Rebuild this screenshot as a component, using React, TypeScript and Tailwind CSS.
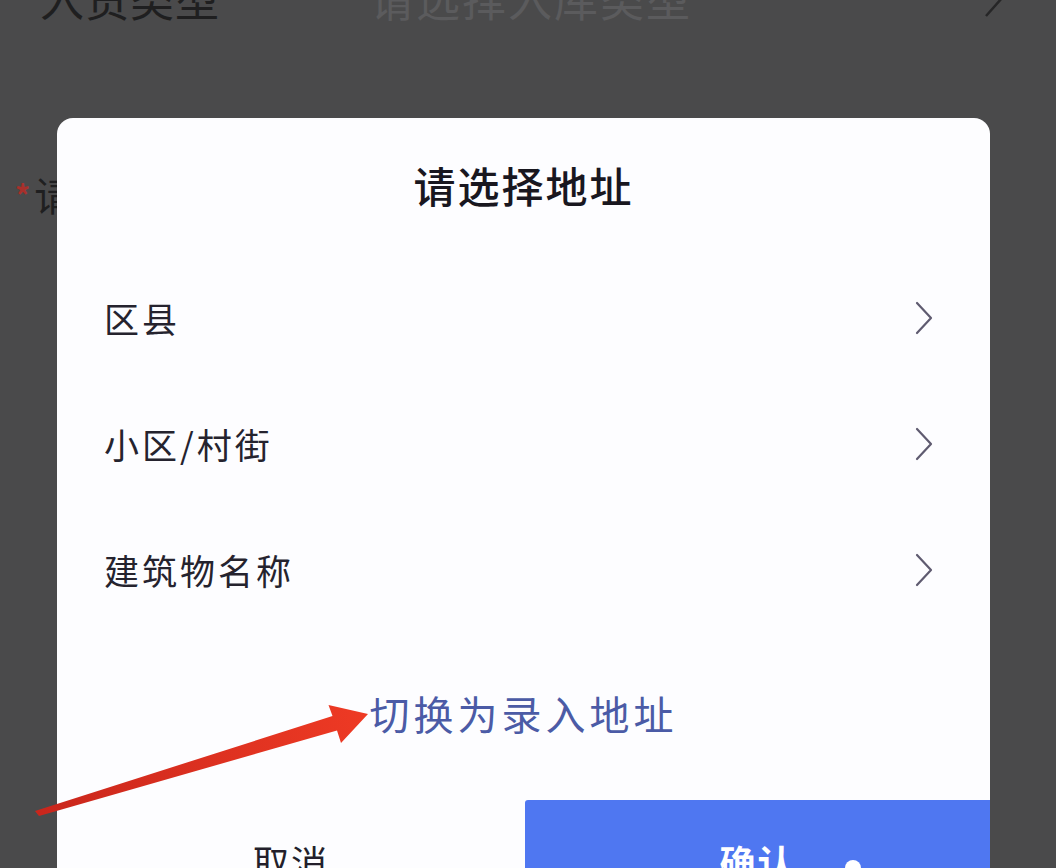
import React from "react";

const font = { fontFamily: '"Noto Sans CJK SC", "Noto Sans", sans-serif' };

function Chevron() {
  return (
    <svg width="20" height="36" viewBox="0 0 20 36" fill="none">
      <polyline points="3,3 17,18 3,33" stroke="#5f5b70" strokeWidth="2.2" strokeLinecap="round" strokeLinejoin="round" />
    </svg>
  );
}

function Row({ label }: { label: string }) {
  return (
    <div className="flex h-[126px] items-center justify-between pl-[47px] pr-[56px]">
      <span className="text-[35px] leading-[40px] tracking-[3px] text-[#25232e]">{label}</span>
      <Chevron />
    </div>
  );
}

export default function App() {
  return (
    <div className="relative h-[868px] w-[1056px] overflow-hidden bg-[#4a4a4b]" style={font}>
      {/* page behind the overlay */}
      <div className="-mt-[26px] flex items-center justify-between pl-[40px] pr-[52px]">
        <div className="flex items-center gap-[150px]">
          <span className="text-[44px] leading-[48px] tracking-[1px] text-[#1f1f20]">入货类型</span>
          <span className="text-[44px] leading-[48px] tracking-[2px] text-[#5b5b5d]">请选择入库类型</span>
        </div>
        <svg width="20" height="40" viewBox="0 0 20 40" fill="none">
          <polyline points="2,2 18,20 2,38" stroke="#262627" strokeWidth="2.5" />
        </svg>
      </div>
      <div className="mt-[150px] flex items-center pl-[15px]">
        <span className="text-[30px] font-bold leading-[30px] text-[#a8302b]">*</span>
        <span className="ml-[4px] text-[40px] leading-[44px] text-[#1f1f20]">请</span>
      </div>

      {/* modal */}
      <div className="absolute left-[57px] top-[118px] w-[933px] overflow-hidden rounded-t-[16px] bg-[#fdfdff]">
        <div className="pt-[46px] text-center text-[42px] font-medium leading-[42px] tracking-[2px] text-[#19171f]">
          请选择地址
        </div>
        <div className="mt-[49px]">
          <Row label="区县" />
          <Row label="小区/村街" />
          <Row label="建筑物名称" />
        </div>
        <div className="mt-[60px] text-center text-[40px] leading-[40px] tracking-[4px] text-[#4b5ba6]">
          切换为录入地址
        </div>
        <div className="mt-[67px] flex h-[122px]">
          <div className="flex w-[468px] items-center justify-center text-[36px] tracking-[2px] text-[#231f2b]">
            取消
          </div>
          <div className="flex flex-1 items-center justify-center rounded-tl-[3px] bg-[#4f77f1] text-[36px] font-bold tracking-[2px] text-white">
            确认
          </div>
        </div>
      </div>

      {/* small watermark blob */}
      <div className="absolute left-[845px] top-[860px] h-[16px] w-[16px] rounded-full bg-white" />

      {/* red annotation arrow */}
      <svg className="pointer-events-none absolute left-0 top-0" width="1056" height="868" viewBox="0 0 1056 868">
        <defs>
          <linearGradient id="arrowGrad" x1="38" y1="813" x2="367" y2="714" gradientUnits="userSpaceOnUse">
            <stop offset="0" stopColor="#c9261c" />
            <stop offset="1" stopColor="#ee3a24" />
          </linearGradient>
        </defs>
        <polygon
          points="35,811 332.5,716 328.5,705 368,714 341,743 337,730.5 39,816"
          fill="url(#arrowGrad)"
        />
      </svg>
    </div>
  );
}
